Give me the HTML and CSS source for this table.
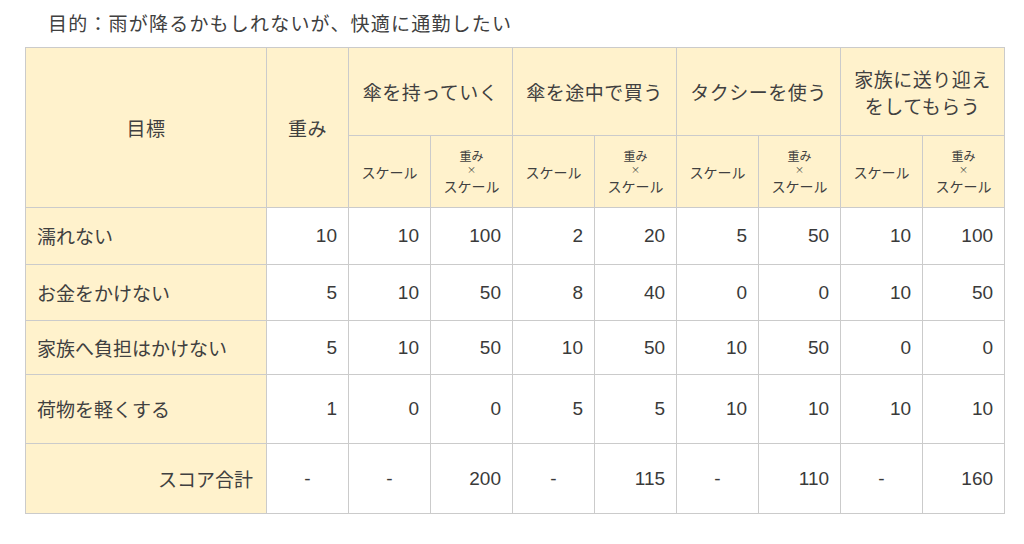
FILE: index.html
```html
<!DOCTYPE html>
<html lang="ja">
<head>
<meta charset="utf-8">
<link rel="stylesheet" href="styles.css">
</head>
<body>
<div class="page">
  <h1 class="title">目的：雨が降るかもしれないが、快適に通勤したい</h1>
  <table class="grid">
    <colgroup>
      <col class="c-goal">
      <col class="c-num"><col class="c-num"><col class="c-num"><col class="c-num"><col class="c-num">
      <col class="c-num"><col class="c-num"><col class="c-num"><col class="c-num">
    </colgroup>
    <thead>
      <tr class="h1">
        <th rowspan="2" class="hd">目標</th>
        <th rowspan="2" class="hd">重み</th>
        <th colspan="2" class="hd">傘を持っていく</th>
        <th colspan="2" class="hd">傘を途中で買う</th>
        <th colspan="2" class="hd">タクシーを使う</th>
        <th colspan="2" class="hd two">家族に送り迎え<br>をしてもらう</th>
      </tr>
      <tr class="h2">
        <th class="sub">スケール</th>
        <th class="sub"><span class="w">重み</span><span class="x">×</span><span class="s">スケール</span></th>
        <th class="sub">スケール</th>
        <th class="sub"><span class="w">重み</span><span class="x">×</span><span class="s">スケール</span></th>
        <th class="sub">スケール</th>
        <th class="sub"><span class="w">重み</span><span class="x">×</span><span class="s">スケール</span></th>
        <th class="sub">スケール</th>
        <th class="sub"><span class="w">重み</span><span class="x">×</span><span class="s">スケール</span></th>
      </tr>
    </thead>
    <tbody>
      <tr class="r1">
        <th class="label">濡れない</th>
        <td>10</td><td>10</td><td>100</td><td>2</td><td>20</td><td>5</td><td>50</td><td>10</td><td>100</td>
      </tr>
      <tr class="r2">
        <th class="label">お金をかけない</th>
        <td>5</td><td>10</td><td>50</td><td>8</td><td>40</td><td>0</td><td>0</td><td>10</td><td>50</td>
      </tr>
      <tr class="r3">
        <th class="label">家族へ負担はかけない</th>
        <td>5</td><td>10</td><td>50</td><td>10</td><td>50</td><td>10</td><td>50</td><td>0</td><td>0</td>
      </tr>
      <tr class="r4">
        <th class="label">荷物を軽くする</th>
        <td>1</td><td>0</td><td>0</td><td>5</td><td>5</td><td>10</td><td>10</td><td>10</td><td>10</td>
      </tr>
      <tr class="r5">
        <th class="label total">スコア合計</th>
        <td class="dash">-</td><td class="dash">-</td><td>200</td><td class="dash">-</td><td>115</td><td class="dash">-</td><td>110</td><td class="dash">-</td><td>160</td>
      </tr>
    </tbody>
  </table>
</div>
</body>
</html>
```
FILE: styles.css
```css
html, body {
  margin: 0;
  padding: 0;
  background: #ffffff;
}

.page {
  padding: 9px 0 0 25px;
  font-family: "Liberation Sans", "Noto Sans CJK JP", sans-serif;
  color: #3a3a3a;
}

.title {
  margin: 0 0 10px 23px;
  font-family: "Noto Sans CJK JP", sans-serif;
  font-weight: normal;
  font-size: 19px;
  letter-spacing: 1.2px;
  line-height: 28px;
  color: #404040;
}

.grid {
  border-collapse: collapse;
  table-layout: fixed;
  width: 978px;
  border: 1px solid #c2c2c2;
}

.c-goal { width: 241px; }
.c-num { width: 82px; }

.grid th,
.grid td {
  border: 1px solid #cbcbcb;
  padding: 0;
  font-weight: normal;
  vertical-align: middle;
}

.hd,
.sub,
.label {
  background: #fff2cc;
  font-family: "Noto Sans CJK JP", sans-serif;
  color: #404040;
}

.hd {
  font-size: 19px;
  letter-spacing: 0.5px;
  line-height: 27px;
  text-align: center;
}

.h1 { height: 88px; }
.h2 { height: 72px; }

.sub {
  text-align: center;
  font-size: 14px;
  line-height: 18px;
}

.sub .w,
.sub .x,
.sub .s {
  display: block;
}

.sub .w {
  font-size: 12px;
  line-height: 15px;
}

.sub .x {
  font-size: 9px;
  line-height: 14px;
}

.sub .s {
  font-size: 14px;
  line-height: 18px;
}

.label {
  text-align: left;
  padding-left: 11px !important;
  font-size: 19px;
  line-height: 24px;
}

.label.total {
  text-align: right;
  padding-left: 0 !important;
  padding-right: 13px !important;
}

.grid td {
  text-align: right;
  padding-right: 11px;
  font-size: 19px;
  line-height: 24px;
  color: #3a3a3a;
  background: #ffffff;
}

.grid td.dash {
  text-align: center;
  padding-right: 0;
}

.r1 { height: 57px; }
.r2 { height: 56px; }
.r3 { height: 54px; }
.r4 { height: 69px; }
.r5 { height: 70px; }
```
